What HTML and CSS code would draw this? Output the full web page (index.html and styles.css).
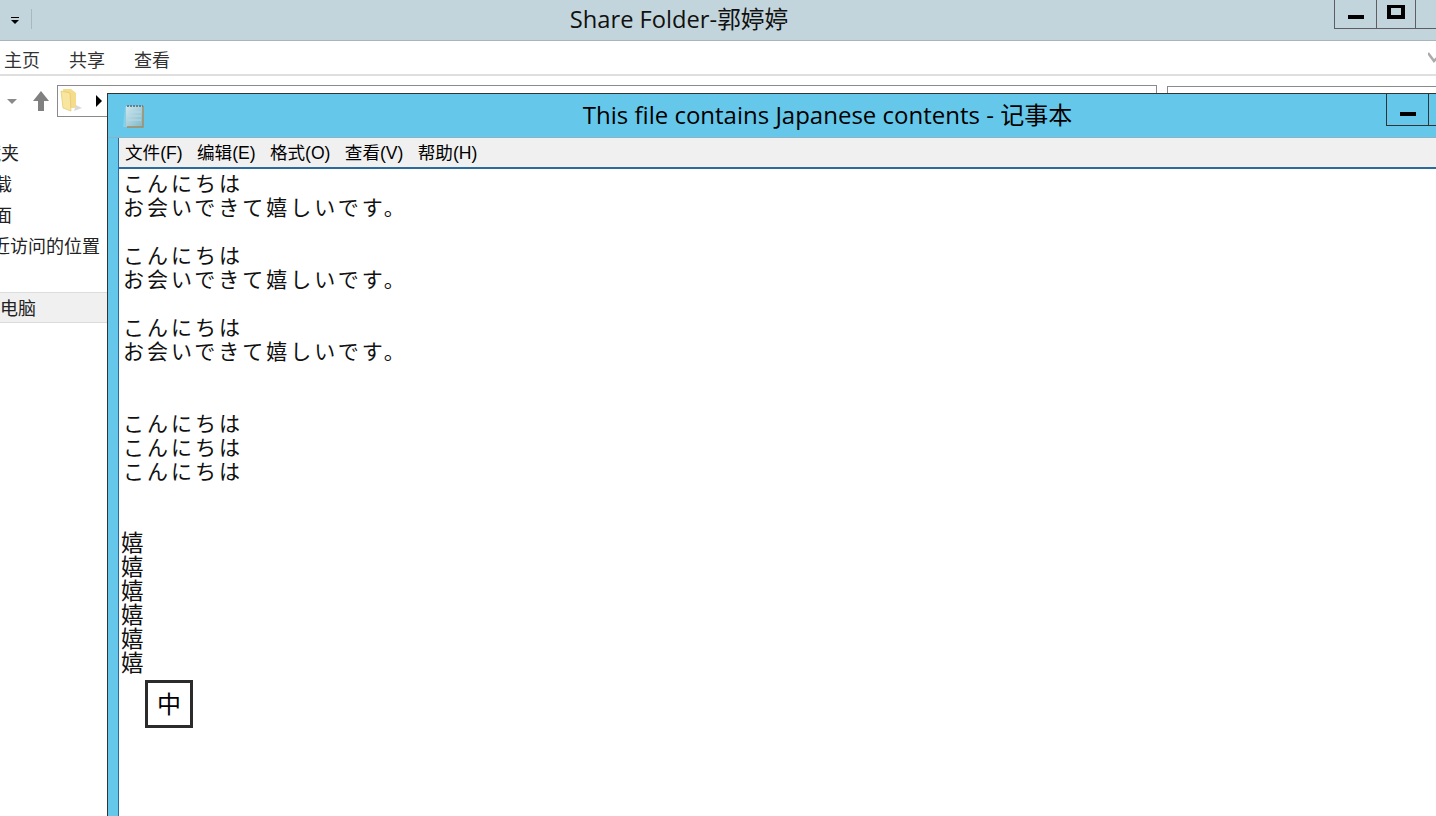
FILE: index.html
```html
<!DOCTYPE html>
<html lang="zh">
<head>
<meta charset="utf-8">
<title>Share Folder-郭婷婷</title>
<link rel="stylesheet" href="styles.css">
</head>
<body>
<div class="desktop">
  <section class="explorer">
    <header class="ex-title">
      <div class="qat">
        <svg class="qat-arrow" width="10" height="8" viewBox="0 0 10 8"><path d="M1 0h8v1H1zM1 3h8L5 7z" fill="#000"/></svg>
        <span class="qat-sep"></span>
      </div>
      <div class="ex-title-text">Share Folder-郭婷婷</div>
      <div class="ex-controls">
        <div class="ctl ctl-min"><span class="glyph-min"></span></div>
        <div class="ctl ctl-max"><span class="glyph-max"></span></div>
        <div class="ctl ctl-close"></div>
      </div>
    </header>
    <nav class="ribbon">
      <span class="tab">主页</span>
      <span class="tab">共享</span>
      <span class="tab">查看</span>
      <svg class="ribbon-chev" width="10" height="12" viewBox="0 0 10 12"><path d="M0 1l6 8 4-4" fill="none" stroke="#aaa" stroke-width="2.5"/></svg>
    </nav>
    <div class="addr-row">
      <svg class="nav-drop" width="10" height="6" viewBox="0 0 10 6"><path d="M0 0h10L5 5z" fill="#8a8a8a"/></svg>
      <svg class="nav-up" width="16" height="20" viewBox="0 0 16 20"><path d="M8 0L0 10h5v10h6V10h5z" fill="#808080"/></svg>
      <div class="addr">
        <svg class="folder" width="24" height="24" viewBox="0 0 24 24">
          <path d="M3 1h8l5 4v15H5z" fill="#f5dc8a"/>
          <path d="M1 3l9 2 1 18-8-3z" fill="#f8e6a0" stroke="#e3c56a" stroke-width=".7"/>
          <path d="M16 17l6 3-8 3z" fill="#d9d9d9"/>
        </svg>
        <svg class="crumb" width="8" height="12" viewBox="0 0 8 12"><path d="M1 0l6 6-6 6z" fill="#000"/></svg>
        <span class="addr-text">这台电脑</span>
        <span class="addr-text addr-second">共享盘</span>
        <span class="addr-text addr-third">郭婷婷</span>
      </div>
      <div class="search"><span class="search-text">搜索</span></div>
    </div>
    <div class="ex-body">
      <ul class="tree">
        <li>收藏夹</li>
        <li>下载</li>
        <li>桌面</li>
        <li class="wide">最近访问的位置</li>
        <li class="spacer"></li>
        <li class="selected">这台电脑</li>
      </ul>
    </div>
  </section>

  <section class="notepad">
    <header class="np-title">
      <svg class="np-icon" width="24" height="26" viewBox="0 0 24 26">
        <defs><linearGradient id="pad" x1="0" y1="0" x2="1" y2="1"><stop offset="0" stop-color="#cfe7ee"/><stop offset="1" stop-color="#7fb7c8"/></linearGradient></defs>
        <path d="M3 4h18v20H1z" fill="#9fd3e3" opacity=".6"/>
        <rect x="4" y="3" width="17" height="21" fill="url(#pad)"/>
        <path d="M21 3v21H5" fill="none" stroke="#a68a5e" stroke-width="1.4"/>
        <path d="M5 3h16" stroke="#6d7f88" stroke-width="2" stroke-dasharray="2 1"/>
        <path d="M6 9h13M6 13h13M6 17h13" stroke="#b7dbe5" stroke-width="1"/>
      </svg>
      <div class="np-title-text">This file contains Japanese contents - 记事本</div>
      <div class="np-controls">
        <div class="ctl np-min"><span class="glyph-min"></span></div>
        <div class="ctl np-max"></div>
      </div>
    </header>
    <div class="np-inner">
      <div class="menu">
        <span class="menu-item">文件(F)</span>
        <span class="menu-item">编辑(E)</span>
        <span class="menu-item">格式(O)</span>
        <span class="menu-item">查看(V)</span>
        <span class="menu-item">帮助(H)</span>
      </div>
      <div class="editor">
        <div class="jp">こんにちは</div>
        <div class="jp">お会いできて嬉しいです。</div>
        <div class="blank"></div>
        <div class="jp">こんにちは</div>
        <div class="jp">お会いできて嬉しいです。</div>
        <div class="blank"></div>
        <div class="jp">こんにちは</div>
        <div class="jp">お会いできて嬉しいです。</div>
        <div class="blank"></div>
        <div class="blank"></div>
        <div class="jp">こんにちは</div>
        <div class="jp">こんにちは</div>
        <div class="jp">こんにちは</div>
        <div class="blank"></div>
        <div class="blank"></div>
        <div class="cn">嬉</div>
        <div class="cn">嬉</div>
        <div class="cn">嬉</div>
        <div class="cn">嬉</div>
        <div class="cn">嬉</div>
        <div class="cn">嬉</div>
        <div class="ime">中</div>
      </div>
    </div>
  </section>
</div>
</body>
</html>
```
FILE: styles.css
```css
* { box-sizing: border-box; }
html, body { margin: 0; padding: 0; height: 100%; overflow: hidden; background: #fff; }
body { font-family: "Noto Sans CJK SC", "Noto Sans", sans-serif; color: #000; }
.desktop { position: relative; width: 1436px; height: 816px; overflow: hidden; }

.explorer { display: flex; flex-direction: column; height: 816px; }

.ex-title { position: relative; display: flex; justify-content: center; height: 41px; background: #c3d5dc; border-bottom: 1px solid #a9b5bb; }
.qat { position: absolute; left: 0; top: 0; display: flex; align-items: flex-start; }
.qat-arrow { margin: 17px 0 0 10px; }
.qat-sep { width: 1px; height: 20px; margin: 9px 0 0 11px; background: #a8b8bf; }
.ex-title-text { font-size: 23.7px; line-height: 38px; color: #111; font-family: "Open Sans", "Noto Sans CJK SC", sans-serif; margin-right: 78px; }
.ex-controls { position: absolute; right: 0; top: 0; display: flex; height: 29px; border-bottom: 1px solid #5d5d62; border-left: 1px solid #5d5d62; }
.ctl { display: flex; align-items: center; justify-content: center; }
.ctl-min { width: 42px; border-right: 1px solid #5d5d62; }
.ctl-max { width: 39px; border-right: 1px solid #5d5d62; }
.ctl-close { width: 20px; }
.glyph-min { display: block; width: 16px; height: 4px; background: #000; margin-top: 6px; }
.glyph-max { display: block; width: 18px; height: 14px; border: 4px solid #000; border-top-width: 3px; margin-top: -4px; }

.ribbon { position: relative; display: flex; height: 35px; padding-left: 4px; gap: 29px; border-bottom: 2px solid #dfdfdf; background: #fff; }
.tab { font-size: 18px; line-height: 37px; color: #333; }
.ribbon-chev { position: absolute; right: -2px; top: 11px; }

.addr-row { display: flex; align-items: flex-start; height: 44px; padding-top: 9px; position: relative; }
.nav-drop { flex: none; margin: 14px 0 0 7px; }
.nav-up { flex: none; margin: 6px 0 0 16px; }
.addr { flex: none; display: flex; align-items: flex-start; width: 1100px; height: 32px; margin-left: 8px; border: 1px solid #8a8a8a; overflow: hidden; }
.folder { flex: none; margin: 2px 0 0 2px; }
.crumb { flex: none; margin: 9px 0 0 11px; }
.addr-text { margin: 4px 0 0 10px; font-size: 18px; line-height: 24px; color: #333; }
.addr-second { margin-left: 45px; }
.addr-third { margin-left: 193px; }
.search { flex: none; width: 280px; height: 31px; margin: 1px 0 0 10px; border: 1px solid #8a8a8a; overflow: hidden; }
.search-text { margin-left: 30px; font-size: 18px; line-height: 30px; color: #777; }

.ex-body { flex: 1; }
.tree { list-style: none; margin: 17px 0 0; padding: 0; width: 107px; font-size: 18px; color: #222; }
.tree li { height: 31px; line-height: 31px; white-space: nowrap; direction: rtl; overflow: hidden; text-align: left; padding-right: 64px; }
.tree li:nth-child(1) { padding-right: 88px; }
.tree li:nth-child(2) { padding-right: 95px; }
.tree li:nth-child(3) { padding-right: 95px; }
.tree li.wide { padding-right: 7px; }
.tree li.spacer { height: 31px; }
.tree li.selected { height: 31px; padding-right: 71px; background: #f0f0f0; border-top: 1px solid #dcdcdc; border-bottom: 1px solid #dcdcdc; line-height: 29px; }

.notepad { position: absolute; left: 107px; top: 93px; width: 1340px; height: 740px; background: #65c8ea; border: 1px solid #333; border-right: 0; border-bottom: 0; }
.np-title { position: relative; display: flex; justify-content: center; height: 44px; border-bottom: 1px solid #8ab4c4; }
.np-icon { position: absolute; left: 14px; top: 9px; }
.np-title-text { font-size: 24px; line-height: 42px; color: #000; font-family: "Open Sans", "Noto Sans CJK SC", sans-serif; margin-left: 100px; white-space: nowrap; }
.np-controls { position: absolute; left: 1278px; top: 0; display: flex; height: 32px; border-bottom: 1px solid #333; border-left: 1px solid #333; }
.np-min { width: 42px; border-right: 1px solid #333; }
.np-max { width: 30px; }
.np-min .glyph-min { margin-top: 8px; }

.np-inner { margin-left: 10px; height: 700px; background: #fff; border-left: 1px solid #2a6a9c; }
.menu { display: flex; height: 31px; padding-left: 6px; gap: 14.3px; background: #f0f0f0; border-bottom: 2px solid #2a6a9c; }
.menu-item { font-size: 17.6px; line-height: 30px; color: #000; white-space: nowrap; font-family: "Liberation Sans", "Noto Sans CJK SC", sans-serif; }

.editor { position: relative; padding: 2px 0 0 4px; font-family: "Noto Sans CJK JP", sans-serif; }
.jp { height: 24px; font-size: 21px; line-height: 22px; letter-spacing: 3px; white-space: nowrap; color: #111; }
.blank { height: 24px; }
.cn { height: 24px; margin-left: -2px; font-family: "Noto Sans CJK SC", sans-serif; font-size: 22.5px; line-height: 20px; color: #111; }
.ime { position: absolute; left: 26px; top: 511px; width: 48px; height: 48px; border: 3px solid #2b2b2b; background: #fff; font-family: "Noto Sans CJK SC", sans-serif; font-size: 24px; line-height: 40px; text-align: center; color: #000; }
```
